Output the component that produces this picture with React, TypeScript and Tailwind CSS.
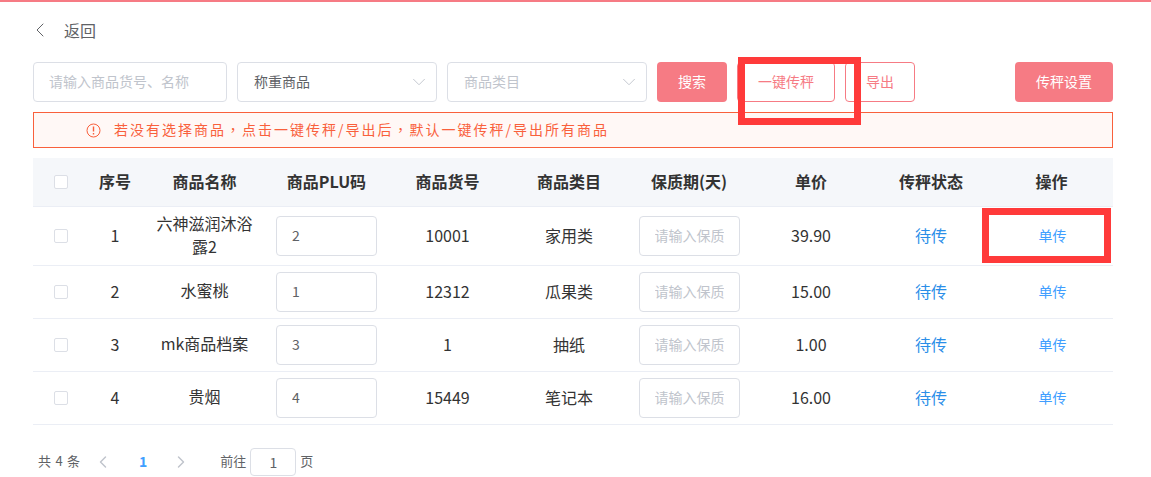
import React from "react";
import { ChevronDown, ChevronLeft, ChevronRight } from "lucide-react";

const rows = [
  { id: 1, name: "六神滋润沐浴露2", plu: "2", sku: "10001", category: "家用类", price: "39.90" },
  { id: 2, name: "水蜜桃", plu: "1", sku: "12312", category: "瓜果类", price: "15.00" },
  { id: 3, name: "mk商品档案", plu: "3", sku: "1", category: "抽纸", price: "1.00" },
  { id: 4, name: "贵烟", plu: "4", sku: "15449", category: "笔记本", price: "16.00" },
];

const headers = ["序号", "商品名称", "商品PLU码", "商品货号", "商品类目", "保质期(天)", "单价", "传秤状态", "操作"];

const Checkbox = () => (
  <span className="block w-[14px] h-[14px] mx-auto bg-white border border-[#dcdfe6] rounded-[2px]"></span>
);

const Select = ({ label, muted }: { label: string; muted?: boolean }) => (
  <div className="w-[200px] h-10 flex items-center justify-between pl-[16px] pr-[6px] border border-[#dcdfe6] rounded text-sm">
    <span className={muted ? "pb-[2px] text-[#c0c4cc]" : "pb-[2px] text-[#606266]"}>{label}</span>
    <ChevronDown size={22} strokeWidth={1} className="text-[#c0c4cc]" />
  </div>
);

// centred comma, as the original font draws it
const Comma = () => <span className="font-['Noto_Sans_CJK_TC']">，</span>;

export default function App() {
  return (
    <div
      className="relative h-[477px] overflow-hidden bg-white border-t-2 border-[#f67b84] pl-[33px] pr-[38px] text-[#333333]"
      style={{ fontFamily: '"Noto Sans CJK SC", sans-serif' }}
    >
      <div className="h-[60px] flex items-center pb-[4px] text-[#606266]">
        <ChevronLeft size={24} strokeWidth={1} className="-ml-[5px] text-[#606266]" />
        <span className="ml-[12px] text-base">返回</span>
      </div>

      <div className="flex items-center h-10 text-sm">
        <input
          placeholder="请输入商品货号、名称"
          className="w-[194px] h-10 pl-[15px] pr-[15px] pb-[2px] border border-[#dcdfe6] rounded outline-none placeholder:text-[#c0c4cc]"
        />
        <div className="flex gap-[10px] ml-[10px]">
          <Select label="称重商品" />
          <Select label="商品类目" muted />
        </div>
        <button className="w-[70px] h-10 ml-[10px] pb-[2px] bg-[#f67b84] rounded text-white">搜索</button>
        <button className="w-[98px] h-10 ml-[10px] pb-[2px] border border-[#f67b84] rounded text-[#f67b84]">一键传秤</button>
        <button className="w-[70px] h-10 ml-[10px] pb-[2px] border border-[#f67b84] rounded text-[#f67b84]">导出</button>
        <button className="w-[98px] h-10 ml-auto pb-[2px] bg-[#f67b84] rounded text-white">传秤设置</button>
      </div>

      <div className="h-9 mt-[10px] flex items-center pl-[52px] border border-[#f9603c] bg-[#fff8f6] text-[14px] tracking-[2px] text-[#f9603c]">
        <svg width="15" height="15" viewBox="0 0 15 15" fill="none" className="shrink-0">
          <circle cx="7.5" cy="7.5" r="6.5" stroke="#f9603c" strokeWidth="1" />
          <path d="M7.5 3.6v4.8M7.5 10v1.4" stroke="#f9603c" strokeWidth="1.4" />
        </svg>
        <span className="ml-[13px] pb-[2px]">
          若没有选择商品<Comma />点击一键传秤/导出后<Comma />默认一键传秤/导出所有商品
        </span>
      </div>

      <table className="w-[1080px] mt-[10px] table-fixed border-collapse text-base text-center">
        <colgroup>
          <col className="w-[56px]" />
          <col className="w-[52px]" />
          <col className="w-[127px]" />
          <col className="w-[117px]" />
          <col className="w-[125px]" />
          <col className="w-[118px]" />
          <col className="w-[122px]" />
          <col className="w-[122px]" />
          <col className="w-[118px]" />
          <col className="w-[123px]" />
        </colgroup>
        <thead>
          <tr className="h-[48px] bg-[#f5f7fa] border-b border-[#ebeef5]">
            <th className="p-0 pt-[1px]">
              <Checkbox />
            </th>
            {headers.map((h) => (
              <th key={h} className="p-0 pb-[2px] font-bold text-[#333333] whitespace-nowrap">
                {h}
              </th>
            ))}
          </tr>
        </thead>
        <tbody>
          {rows.map((row) => (
            <tr key={row.id} className="border-b border-[#ebeef5]">
              <td className="p-0 pt-[1px]">
                <Checkbox />
              </td>
              <td className="p-0 pb-[2px]">{row.id}</td>
              <td className="pt-[5px] pb-[7px] px-[12px] leading-[23px]">{row.name}</td>
              <td className="py-[6px] px-0">
                <input
                  defaultValue={row.plu}
                  className="block w-[101px] h-10 mx-auto px-[15px] pb-[2px] border border-[#dcdfe6] rounded outline-none text-sm text-[#606266]"
                />
              </td>
              <td className="p-0 pb-[2px]">{row.sku}</td>
              <td className="p-0 pb-[2px]">{row.category}</td>
              <td className="py-[6px] px-0">
                <input
                  placeholder="请输入保质"
                  className="block w-[101px] h-10 mx-auto px-[15px] pb-[2px] border border-[#dcdfe6] rounded outline-none text-sm placeholder:text-[#c0c4cc]"
                />
              </td>
              <td className="p-0 pb-[2px]">{row.price}</td>
              <td className="p-0 pb-[2px] text-[#2a8ee8]">待传</td>
              <td className="p-0 pb-[2px] pl-[2px] text-sm text-[#409eff]">单传</td>
            </tr>
          ))}
        </tbody>
      </table>

      <div className="flex items-center h-7 mt-[23px] pl-[5px] text-[13px] text-[#606266]">
        <span className="pb-[2px] [word-spacing:1.5px]">共 4 条</span>
        <ChevronLeft size={20} strokeWidth={1.75} className="ml-[13px] text-[#c0c4cc]" />
        <span className="ml-[26px] pb-[2px] text-sm font-bold text-[#409eff]">1</span>
        <ChevronRight size={20} strokeWidth={1.75} className="ml-[24px] text-[#c0c4cc]" />
        <span className="ml-[29px] pb-[2px]">前往</span>
        <input
          defaultValue="1"
          className="w-[46px] h-7 ml-[4px] border border-[#dcdfe6] rounded text-center outline-none text-sm"
        />
        <span className="ml-[4px] pb-[2px]">页</span>
      </div>

      {/* red annotation boxes drawn over the screenshot */}
      <div className="absolute left-[738px] top-[55px] w-[123px] h-[68px] border-[7px] border-[#ff3a3a]"></div>
      <div className="absolute left-[982px] top-[206px] w-[129px] h-[55px] border-[7px] border-[#ff3a3a]"></div>
    </div>
  );
}
